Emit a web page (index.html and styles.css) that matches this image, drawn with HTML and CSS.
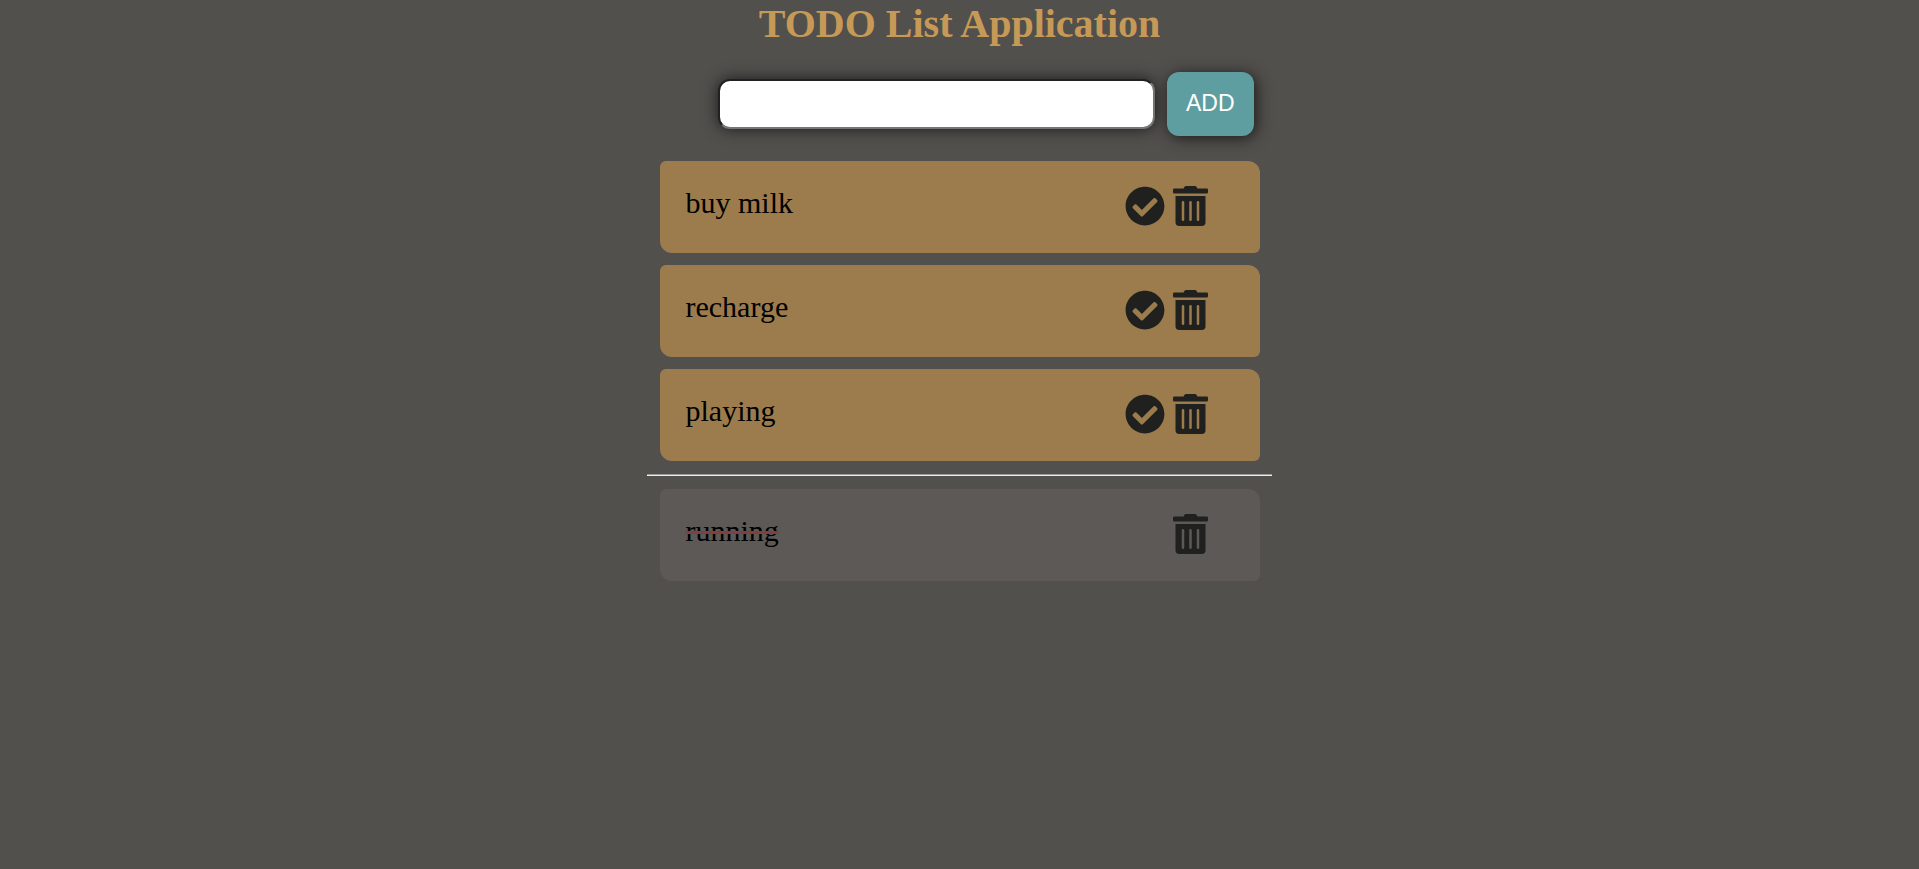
FILE: index.html
```html
<!DOCTYPE html>
<html lang="en">
<head>
<meta charset="utf-8">
<meta name="viewport" content="width=device-width, initial-scale=1">
<title>TODO List Application</title>
<link rel="stylesheet" href="styles.css">
</head>
<body>
<svg class="sprite" aria-hidden="true">
  <symbol id="check" viewBox="0 0 512 512"><path d="M504 256c0 136.967-111.033 248-248 248S8 392.967 8 256 119.033 8 256 8s248 111.033 248 248zM227.314 387.314l184-184c6.248-6.248 6.248-16.379 0-22.627l-22.627-22.627c-6.248-6.249-16.379-6.249-22.628 0L216 308.118l-70.059-70.059c-6.248-6.248-16.379-6.248-22.628 0l-22.627 22.627c-6.248 6.248-6.248 16.379 0 22.627l104 104c6.249 6.249 16.379 6.249 22.628.001z"/></symbol>
  <symbol id="trash" viewBox="0 0 448 512"><path d="M32 464a48 48 0 0 0 48 48h288a48 48 0 0 0 48-48V128H32zm272-256a16 16 0 0 1 32 0v224a16 16 0 0 1-32 0zm-96 0a16 16 0 0 1 32 0v224a16 16 0 0 1-32 0zm-96 0a16 16 0 0 1 32 0v224a16 16 0 0 1-32 0zM432 32H312l-9.4-18.7A24 24 0 0 0 281.1 0H166.8a23.72 23.72 0 0 0-21.4 13.3L136 32H16A16 16 0 0 0 0 48v32a16 16 0 0 0 16 16h416a16 16 0 0 0 16-16V48a16 16 0 0 0-16-16z"/></symbol>
</svg>
<main class="app">
  <h1 class="title">TODO List Application</h1>
  <form class="entry">
    <input class="entry-input" type="text" aria-label="New task">
    <button class="entry-add" type="button">ADD</button>
  </form>
  <ul class="list">
    <li class="item">
      <span class="item-text">buy milk</span>
      <button class="icon-button" type="button" aria-label="Complete buy milk"><svg class="icon-check"><use href="#check"/></svg></button>
      <button class="icon-button" type="button" aria-label="Delete buy milk"><svg class="icon-trash"><use href="#trash"/></svg></button>
    </li>
    <li class="item">
      <span class="item-text">recharge</span>
      <button class="icon-button" type="button" aria-label="Complete recharge"><svg class="icon-check"><use href="#check"/></svg></button>
      <button class="icon-button" type="button" aria-label="Delete recharge"><svg class="icon-trash"><use href="#trash"/></svg></button>
    </li>
    <li class="item">
      <span class="item-text">playing</span>
      <button class="icon-button" type="button" aria-label="Complete playing"><svg class="icon-check"><use href="#check"/></svg></button>
      <button class="icon-button" type="button" aria-label="Delete playing"><svg class="icon-trash"><use href="#trash"/></svg></button>
    </li>
  </ul>
  <hr class="divider">
  <ul class="list">
    <li class="item item-done">
      <span class="item-text">running</span>
      <button class="icon-button" type="button" aria-label="Delete running"><svg class="icon-trash"><use href="#trash"/></svg></button>
    </li>
  </ul>
</main>
</body>
</html>
```
FILE: styles.css
```css
* {
  box-sizing: border-box;
}

body {
  margin: 0;
  background: #52504d;
  color: #000;
  font-family: "Liberation Serif", "Times New Roman", serif;
}

.sprite {
  display: none;
}

.app {
  display: flex;
  flex-direction: column;
  align-items: center;
}

.title {
  margin: 0;
  color: #c69a56;
  font-size: 40px;
  line-height: 48px;
}

.entry {
  display: flex;
  align-items: center;
  gap: 12px;
  width: 100%;
  max-width: 600px;
  margin-top: 24px;
  padding: 0 6px 0 58px;
}

.entry-input {
  flex: 1;
  min-width: 0;
  height: 50px;
  padding: 0 12px;
  border: 2px inset #767676;
  border-radius: 12px;
  background: #fff;
  box-shadow: 0 0 15px #1c1a1b;
  font: 23px "Liberation Sans", Arial, sans-serif;
}

.entry-add {
  padding: 17px 19px 19px;
  border: 0;
  border-radius: 12px;
  background: #5f9ea0;
  box-shadow: 2px 2px 15px #1c1a1b;
  color: #fff;
  font: 23px/28px "Liberation Sans", Arial, sans-serif;
}

.list {
  display: flex;
  flex-direction: column;
  gap: 12px;
  width: 100%;
  max-width: 600px;
  margin: 25px 0 0;
  padding: 0;
  list-style: none;
}

.item {
  display: flex;
  align-items: flex-start;
  gap: 8px;
  padding: 25px 52px 27px 26px;
  border-radius: 6px 12px 6px 12px;
  background: #9c7c4c;
}

.item-done {
  background: #5d5957;
}

.item-text {
  flex: 1;
  font-size: 30px;
  line-height: 34px;
}

.item-done .item-text {
  flex: none;
  margin-right: auto;
  text-decoration: line-through 3px #804040;
}

.icon-button {
  display: block;
  padding: 0;
  border: 0;
  background: none;
  color: #20211f;
}

.icon-check,
.icon-trash {
  display: block;
  width: 40px;
  height: 40px;
  fill: currentColor;
}

.icon-trash {
  width: 35px;
}

.divider {
  width: 100%;
  max-width: 625px;
  margin: 13px 0 0;
  border: 0;
  border-top: 1px solid #9a9a9a;
  border-bottom: 1px solid #eee;
}

.divider + .list {
  margin-top: 13px;
}
```
